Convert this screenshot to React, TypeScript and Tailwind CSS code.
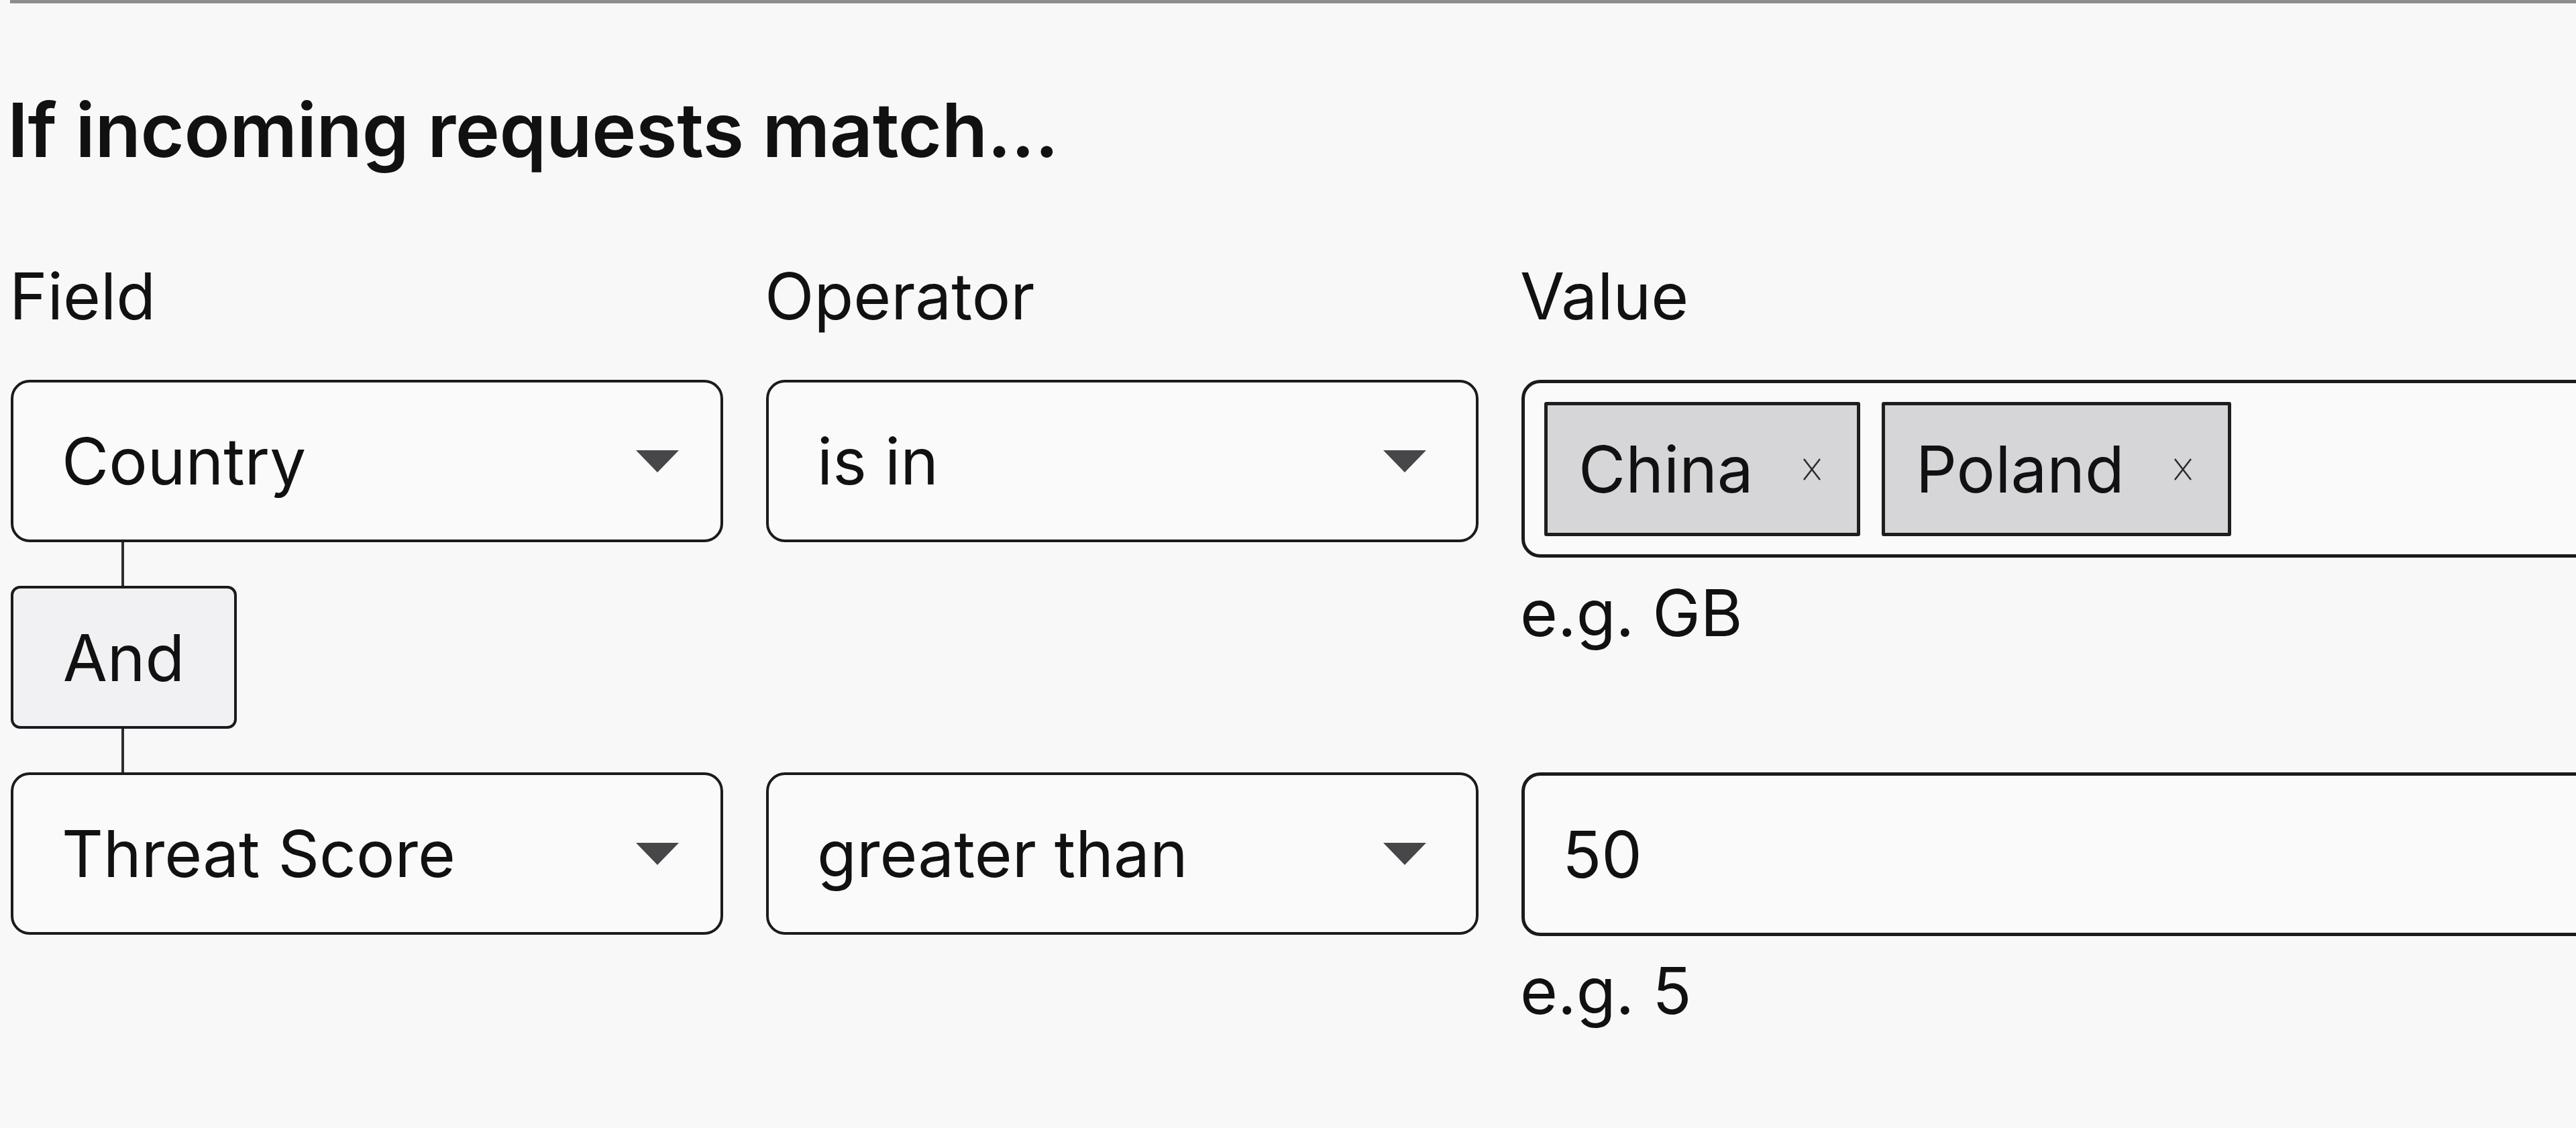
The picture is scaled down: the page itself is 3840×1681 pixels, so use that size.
const rows = [
  { field: 'Country', operator: 'is in', hint: 'e.g. GB' },
  { field: 'Threat Score', operator: 'greater than', hint: 'e.g. 5' },
];

function Caret() {
  return (
    <svg width="68" height="36" viewBox="0 0 68 36" className="shrink-0">
      <path d="M2 2 H66 L34 35 Z" fill="#474648" />
    </svg>
  );
}

function SelectBox({ label, wide }: { label: string; wide?: boolean }) {
  return (
    <div
      className={`flex h-[242px] items-center justify-between rounded-[28px] border-4 border-[#1b1a1c] bg-[#fbfafb] pl-[72px] ${
        wide ? 'pr-[72px]' : 'pr-[60px]'
      }`}
    >
      <span className="text-[96px] leading-[120px]">{label}</span>
      <Caret />
    </div>
  );
}

function Chip({ label }: { label: string }) {
  return (
    <div className="flex h-[200px] items-center gap-[72px] rounded-[3px] border-[5px] border-[#1e1d1f] bg-[#d6d5d8] pl-[46px] pr-[52px]">
      <span className="text-[96px] leading-[120px]">{label}</span>
      <svg width="30" height="40" viewBox="0 0 30 40" className="shrink-0">
        <path d="M3 5 L27 36 M27 5 L3 36" stroke="#2a292b" strokeWidth="2.5" fill="none" />
      </svg>
    </div>
  );
}

function Connector() {
  return <div className="ml-[165px] h-[65px] w-[4px] bg-[#2e2d2f]" />;
}

export default function App() {
  return (
    <div className="h-[1681px] w-full overflow-hidden bg-[#f9f8f9] text-[#111] font-['Inter','Liberation_Sans',sans-serif]">
      <div className="ml-[15px] h-[5px] bg-[#8d8c8e]" />

      <div className="pl-[16px]">
        <h2 className="-ml-[5px] mt-[128px] text-[112px] font-semibold leading-[120px] tracking-[-0.4px]">
          If incoming requests match...
        </h2>

        <div className="mt-[128px] grid grid-cols-[1062px_1062px_1700px] gap-x-[64px]">
          <div className="-ml-[2px] text-[96px] leading-[120px]">Field</div>
          <div className="-ml-[2px] text-[96px] leading-[120px]">Operator</div>
          <div className="-ml-[2px] text-[96px] leading-[120px]">Value</div>

          {/* first condition */}
          <div className="mt-[65px] flex flex-col">
            <SelectBox label={rows[0].field} />
            <Connector />
            <div className="flex h-[213px] w-[337px] items-center justify-center rounded-[14px] border-4 border-[#1b1a1c] bg-[#f1f0f2]">
              <span className="text-[96px] leading-[120px]">And</span>
            </div>
            <Connector />
          </div>
          <div className="mt-[65px]">
            <SelectBox label={rows[0].operator} wide />
          </div>
          <div className="mt-[65px]">
            <div className="flex h-[265px] items-center gap-[32px] rounded-[28px] border-[5px] border-[#1b1a1c] bg-[#fbfafb] pl-[29px]">
              <Chip label="China" />
              <Chip label="Poland" />
            </div>
            <div className="-ml-[2px] mt-[22px] text-[96px] leading-[120px]">{rows[0].hint}</div>
          </div>

          {/* second condition */}
          <div>
            <SelectBox label={rows[1].field} />
          </div>
          <div>
            <SelectBox label={rows[1].operator} wide />
          </div>
          <div>
            <div className="flex h-[244px] items-center rounded-[28px] border-[5px] border-[#1b1a1c] bg-[#fbfafb] pl-[56px]">
              <span className="text-[96px] leading-[120px]">50</span>
            </div>
            <div className="-ml-[2px] mt-[21px] text-[96px] leading-[120px]">{rows[1].hint}</div>
          </div>
        </div>
      </div>
    </div>
  );
}
